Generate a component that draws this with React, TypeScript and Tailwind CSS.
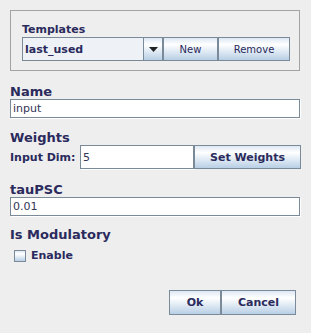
import React from 'react';

const font = { fontFamily: '"DejaVu Sans", "Liberation Sans", sans-serif' };

function OceanButton({ label, className = '', bold = false }: { label: string; className?: string; bold?: boolean }) {
  return (
    <button
      className={`flex items-center justify-center border border-[#7a8a99] bg-[linear-gradient(to_bottom,#dde8f3_0%,#ffffff_30%,#b8cfe5_100%)] text-[#2a2a5c] ${bold ? 'text-[11px] font-bold' : 'text-[10px]'} ${className}`}
    >
      {label}
    </button>
  );
}

function Field({ value, className = '' }: { value: string; className?: string }) {
  return (
    <div className={`flex items-center border border-[#7a8a99] bg-white pl-[2px] text-[11px] text-[#333355] shadow-[1px_1px_0_#ffffff] ${className}`}>
      {value}
    </div>
  );
}

export default function App() {
  return (
    <div className="h-[333px] w-[311px] bg-[#eeeeee] px-[10px] pt-[10px] leading-[15px]" style={font}>
      {/* templates panel */}
      <div className="h-[61px] w-[290px] border border-[#a3a3a3] pl-[11px] pt-[12px]">
        <div className="text-[11px] font-bold leading-[13px] text-[#2a2a5c]">Templates</div>
        <div className="mt-[1px] flex h-[24px]">
          <div className="flex w-[141px] border border-[#7a8a99] bg-[#eef2f7]">
            <div className="flex flex-1 items-center pl-[2px] text-[11px] font-bold text-[#2a2a5c]">last_used</div>
            <div className="flex w-[19px] items-center justify-center border-l border-[#7a8a99] bg-[linear-gradient(to_bottom,#dde8f3_0%,#ffffff_30%,#b8cfe5_100%)]">
              <svg width="9" height="5" viewBox="0 0 9 5">
                <path d="M0 0h9L4.5 5z" fill="#222" />
              </svg>
            </div>
          </div>
          <OceanButton label="New" className="w-[55px]" />
          <OceanButton label="Remove" className="w-[72px]" />
        </div>
      </div>

      <div className="mt-[13px] text-[13px] font-bold text-[#2a2a5c]">Name</div>
      <Field value="input" className="h-[19px] w-[290px]" />

      <div className="mt-[12px] text-[13px] font-bold text-[#2a2a5c]">Weights</div>
      <div className="flex h-[24px] items-center">
        <div className="w-[70px] text-[11px] font-bold text-[#2a2a5c]">Input Dim:</div>
        <Field value="5" className="h-[24px] w-[114px]" />
        <OceanButton label="Set Weights" bold className="h-[24px] w-[107px]" />
      </div>

      <div className="mt-[13px] text-[13px] font-bold text-[#2a2a5c]">tauPSC</div>
      <Field value="0.01" className="h-[19px] w-[290px]" />

      <div className="mt-[11px] text-[13px] font-bold text-[#2a2a5c]">Is Modulatory</div>
      <div className="mt-[6px] flex h-[15px] items-center pl-[4px]">
        <div className="h-[12px] w-[12px] border border-[#7a8a99] bg-[linear-gradient(to_bottom,#dde8f3_0%,#ffffff_30%,#b8cfe5_100%)]" />
        <span className="ml-[5px] text-[11px] font-bold text-[#2a2a5c]">Enable</span>
      </div>

      <div className="mt-[27px] flex justify-end pr-[5px]">
        <OceanButton label="Ok" bold className="h-[25px] w-[52px]" />
        <OceanButton label="Cancel" bold className="h-[25px] w-[75px]" />
      </div>
    </div>
  );
}
